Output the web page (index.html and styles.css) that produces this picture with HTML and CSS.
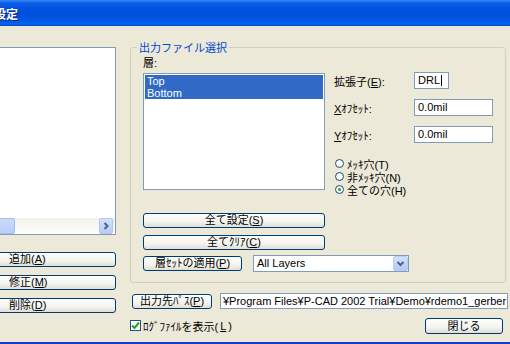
FILE: index.html
```html
<!DOCTYPE html>
<html lang="ja">
<head>
    <meta charset="UTF-8">
    <title>設定</title>
    <link rel="stylesheet" href="styles.css">
</head>
<body>
<div class="window">
    <div class="titlebar"><span class="title">設定</span></div>

    <div class="client">
        <div class="left">
            <div class="listbox leftlist">
                <div class="hscroll">
                    <div class="thumb"></div>
                    <div class="scroll-btn">
                        <svg width="8" height="8" viewBox="0 0 8 8"><path d="M2.5 1 L5.5 4 L2.5 7" fill="none" stroke="#4d6185" stroke-width="2"/></svg>
                    </div>
                </div>
            </div>
            <button class="btn side">追加(<u>A</u>)</button>
            <button class="btn side">修正(<u>M</u>)</button>
            <button class="btn side">削除(<u>D</u>)</button>
        </div>

        <div class="right">
            <fieldset class="group">
                <legend>出力ファイル選択</legend>
                <div class="group-body">
                    <div class="group-top">
                        <div class="layers">
                            <div class="label">層:</div>
                            <div class="listbox layerlist">
                                <div class="item sel">Top</div>
                                <div class="item sel">Bottom</div>
                            </div>
                        </div>
                        <div class="fields">
                            <div class="field first">
                                <span class="flabel">拡張子(<u>E</u>):</span>
                                <span class="textbox short">DRL<span class="caret"></span></span>
                            </div>
                            <div class="field">
                                <span class="flabel"><u>X</u>ｵﾌｾｯﾄ:</span>
                                <span class="textbox">0.0mil</span>
                            </div>
                            <div class="field">
                                <span class="flabel"><u>Y</u>ｵﾌｾｯﾄ:</span>
                                <span class="textbox">0.0mil</span>
                            </div>
                            <div class="radios">
                                <div class="radio"><span class="dot"></span>ﾒｯｷ穴(T)</div>
                                <div class="radio"><span class="dot"></span>非ﾒｯｷ穴(N)</div>
                                <div class="radio"><span class="dot on"></span>全ての穴(H)</div>
                            </div>
                        </div>
                    </div>
                    <button class="btn wide first-wide">全て設定(<u>S</u>)</button>
                    <button class="btn wide">全てｸﾘｱ(<u>C</u>)</button>
                    <div class="set-row">
                        <button class="btn apply">層ｾｯﾄの適用(<u>P</u>)</button>
                        <div class="combo">
                            <span class="combo-text">All Layers</span>
                            <span class="combo-btn">
                                <svg width="9" height="9" viewBox="0 0 9 9"><path d="M1.5 3 L4.5 6 L7.5 3" fill="none" stroke="#4d6185" stroke-width="2"/></svg>
                            </span>
                        </div>
                    </div>
                </div>
            </fieldset>

            <div class="path-row">
                <button class="btn path-btn">出力先ﾊﾟｽ(<u>P</u>)</button>
                <span class="textbox path">¥Program Files¥P-CAD 2002 Trial¥Demo¥rdemo1_gerber</span>
            </div>

            <div class="log-row">
                <label class="check">
                    <span class="box">
                        <svg width="9" height="9" viewBox="0 0 9 9"><path d="M1 4.5 L3.5 7 L8 1.5" fill="none" stroke="#21a121" stroke-width="2"/></svg>
                    </span>
                    ﾛｸﾞﾌｧｲﾙを表示(<u>L</u>)
                </label>
                <button class="btn close">閉じる</button>
            </div>
        </div>
    </div>
</div>
</body>
</html>
```

FILE: styles.css
```css
body {
    margin: 0;
    width: 510px;
    height: 344px;
    overflow: hidden;
    background-color: #ece9d8;
    font-family: "Liberation Sans", "Noto Sans CJK JP", sans-serif;
    font-size: 11px;
    color: #000;
}

.window {
    height: 344px;
    display: flex;
    flex-direction: column;
    border-bottom: 2px solid #0b3fd0;
    box-sizing: border-box;
}

.titlebar {
    height: 26px;
    flex: none;
    display: flex;
    align-items: center;
    background: linear-gradient(#3a8cf7 0px, #0a5fe9 3px, #0053e1 8px, #0050dd 16px, #035ceb 22px, #0a62f2 24px, #0047c8 26px);
}

.title {
    margin-left: -6px;
    color: #fff;
    font-family: "Noto Sans CJK JP", sans-serif;
    font-size: 12px;
    font-weight: bold;
    text-shadow: 1px 1px 0 #0a1e6e;
}

.client {
    flex: 1;
    display: flex;
    align-items: flex-start;
}

/* left side */
.left {
    width: 128px;
    margin-left: -12px;
    margin-top: 21px;
    display: flex;
    flex-direction: column;
    gap: 8px;
}

.listbox {
    background: #fff;
    border: 1px solid #7f9db9;
    box-sizing: border-box;
}

.leftlist {
    height: 188px;
    display: flex;
    flex-direction: column;
    justify-content: flex-end;
    margin-bottom: 9px;
}

.hscroll {
    height: 16px;
    display: flex;
    background: linear-gradient(#f3f1ec, #fefefe);
    justify-content: space-between;
    padding-right: 2px;
}

.thumb {
    width: 24px;
    background: linear-gradient(#cbdaf8, #b9cdf6);
    border: 1px solid #a8bde8;
    border-radius: 2px;
}

.scroll-btn {
    width: 14px;
    display: flex;
    align-items: center;
    justify-content: center;
    background: linear-gradient(#d4e1fc, #b8cbf7);
    border: 1px solid #b3c6f0;
    border-radius: 2px;
    box-sizing: border-box;
}

.btn {
    height: 15px;
    padding: 0;
    font-family: inherit;
    font-size: 11px;
    line-height: 13px;
    color: #000;
    background: linear-gradient(#fefefe, #f3f3ef 60%, #e1ded3);
    border: 1px solid #003c74;
    border-radius: 3px;
    box-sizing: border-box;
    text-align: center;
}

.side {
    text-align: left;
    padding-left: 20px;
}

/* right side */
.right {
    width: 380px;
    margin-left: 14px;
    margin-top: 14px;
}

.group {
    width: 376px;
    margin: 0;
    padding: 0;
    border: 1px solid #d0d0bf;
    border-radius: 3px;
    box-sizing: border-box;
}

.group legend {
    margin-left: 6px;
    padding: 0 2px;
    line-height: 14px;
    color: #0046d5;
    font-family: "Noto Sans CJK JP", sans-serif;
}

.group-body {
    padding: 3px 0 10px 12px;
}

.group-top {
    display: flex;
    gap: 9px;
    height: 133px;
}

.layers {
    width: 182px;
}

.label {
    height: 13px;
    line-height: 13px;
    margin-bottom: 3px;
}

.layerlist {
    height: 117px;
    padding: 1px;
}

.item {
    line-height: 12px;
    padding-left: 2px;
}

.item.sel {
    background: #316ac5;
    color: #fff;
}

.fields {
    width: 160px;
}

.field {
    display: flex;
    align-items: center;
    height: 17px;
    margin-top: 10px;
}

.field.first {
    margin-top: 15px;
}

.flabel {
    width: 80px;
}

.textbox {
    height: 17px;
    width: 79px;
    background: #fff;
    border: 1px solid #7f9db9;
    box-sizing: border-box;
    padding-left: 3px;
    line-height: 15px;
    white-space: nowrap;
    overflow: hidden;
}

.textbox.short {
    width: 35px;
    display: flex;
    align-items: center;
}

.caret {
    width: 1px;
    height: 11px;
    background: #000;
    margin-left: 1px;
}

.radios {
    margin-top: 14px;
}

.radio {
    display: flex;
    align-items: center;
    height: 13px;
    gap: 3px;
    margin-left: 1px;
}

.dot {
    width: 9px;
    height: 9px;
    border-radius: 50%;
    border: 1px solid #1c5180;
    background: radial-gradient(#fff 40%, #e2e1d9);
    box-sizing: border-box;
    display: flex;
    align-items: center;
    justify-content: center;
}

.dot.on::after {
    content: "";
    width: 3px;
    height: 3px;
    border-radius: 50%;
    background: #21a121;
}

.wide {
    display: block;
    width: 182px;
    margin-top: 7px;
}

.first-wide {
    margin-top: 23px;
}

.set-row {
    display: flex;
    align-items: center;
    margin-top: 5px;
    height: 17px;
}

.apply {
    width: 99px;
}

.combo {
    width: 156px;
    height: 17px;
    margin-left: 11px;
    display: flex;
    background: #fff;
    border: 1px solid #7f9db9;
    box-sizing: border-box;
}

.combo-text {
    flex: 1;
    padding-left: 3px;
    line-height: 15px;
}

.combo-btn {
    width: 15px;
    display: flex;
    align-items: center;
    justify-content: center;
    background: linear-gradient(#d4e1fc, #b4c8f6);
    border: 1px solid #bccdf3;
    border-radius: 2px;
    box-sizing: border-box;
}

.path-row {
    display: flex;
    align-items: center;
    margin-top: 10px;
    height: 16px;
}

.path-btn {
    width: 80px;
    margin-left: 2px;
}

.path {
    width: 288px;
    height: 16px;
    margin-left: 8px;
    line-height: 14px;
    padding-left: 2px;
}

.log-row {
    display: flex;
    justify-content: space-between;
    align-items: flex-start;
    margin-top: 9px;
}

.check {
    display: flex;
    align-items: center;
    gap: 2px;
    height: 13px;
    margin-top: 1px;
}

.box {
    width: 11px;
    height: 11px;
    border: 1px solid #1c5180;
    background: #fff;
    box-sizing: border-box;
    display: flex;
    align-items: center;
    justify-content: center;
}

.close {
    width: 78px;
    height: 16px;
    margin-right: 7px;
}
```
